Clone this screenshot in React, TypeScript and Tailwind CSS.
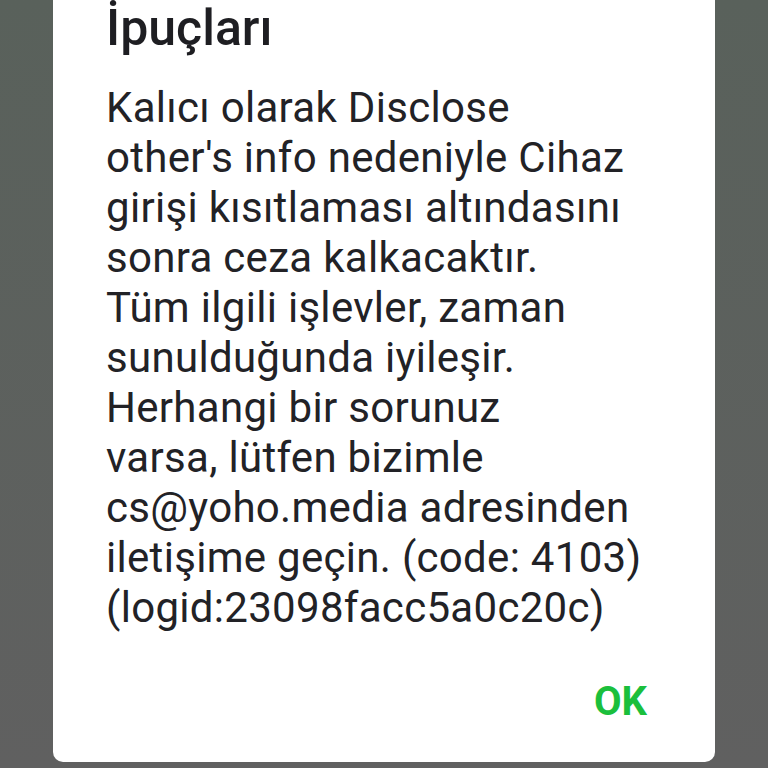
import React from "react";

const lines = [
  "Kalıcı olarak Disclose",
  "other's info nedeniyle Cihaz",
  "girişi kısıtlaması altındasını",
  "sonra ceza kalkacaktır.",
  "Tüm ilgili işlevler, zaman",
  "sunulduğunda iyileşir.",
  "Herhangi bir sorunuz",
  "varsa, lütfen bizimle",
  "cs@yoho.media adresinden",
  "iletişime geçin. (code: 4103)",
  "(logid:23098facc5a0c20c)",
];

export default function App() {
  return (
    <div
      className="w-[768px] h-[768px] overflow-hidden bg-gradient-to-b from-[#59615b] to-[#606060] flex justify-center"
      style={{ fontFamily: "Roboto, 'Noto Sans', sans-serif" }}
    >
      <div className="w-[662px] h-[762px] bg-white rounded-b-[10px] pl-[53px] pr-[10px] flex flex-col">
        <div className="text-[50px] leading-[56px] font-medium text-[#1e1e22]">İpuçları</div>
        <div className="mt-[27px] text-[42px] leading-[50px] tracking-[0.3px] text-[#222226]">
          {lines.map((l) => (
            <div key={l} className="whitespace-nowrap">{l}</div>
          ))}
        </div>
        <div className="flex justify-end mt-[44px] pr-[58px]">
          <span className="text-[40px] leading-[50px] font-bold text-[#1bbf3c]">OK</span>
        </div>
      </div>
    </div>
  );
}
